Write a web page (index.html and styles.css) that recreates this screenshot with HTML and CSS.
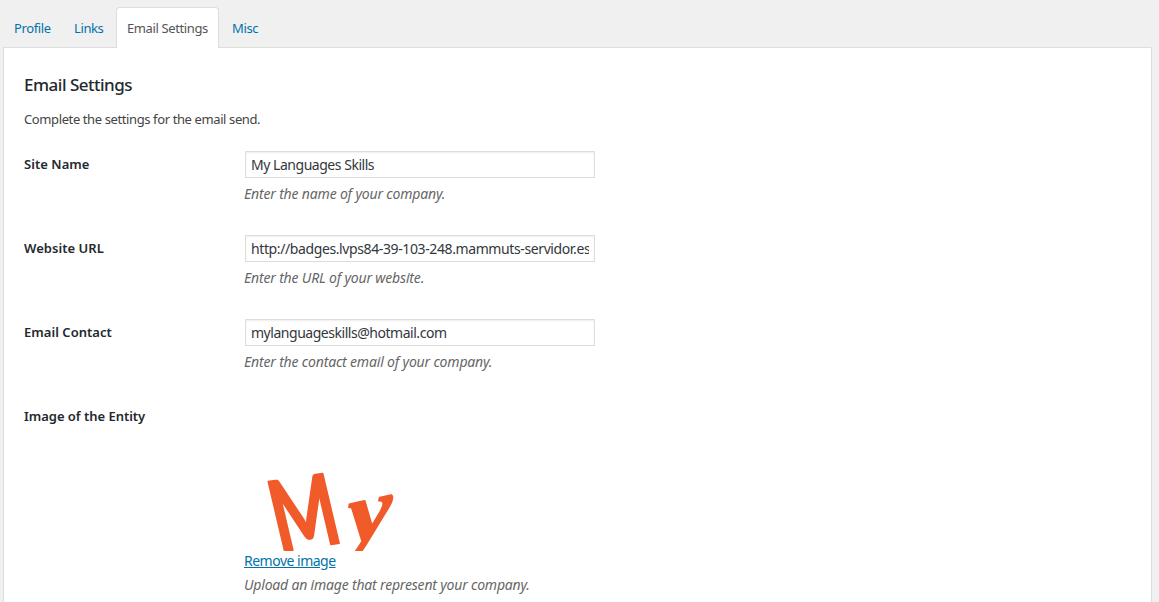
FILE: index.html
```html
<!DOCTYPE html>
<html lang="en">
<head>
<meta charset="utf-8">
<title>Email Settings</title>
<link rel="stylesheet" href="styles.css">
</head>
<body>
<nav class="tabs">
  <a class="tab tab-profile" href="#">Profile</a>
  <a class="tab tab-links" href="#">Links</a>
  <a class="tab tab-active" href="#">Email Settings</a>
  <a class="tab tab-misc" href="#">Misc</a>
</nav>
<main class="panel">
  <h2 class="title">Email Settings</h2>
  <p class="intro">Complete the settings for the email send.</p>
  <div class="row">
    <label class="label" for="site">Site Name</label>
    <div class="field">
      <input class="input" id="site" type="text" value="My Languages Skills">
      <p class="hint">Enter the name of your company.</p>
    </div>
  </div>
  <div class="row">
    <label class="label" for="url">Website URL</label>
    <div class="field">
      <input class="input input-url" id="url" type="text" value="http://badges.lvps84-39-103-248.mammuts-servidor.es">
      <p class="hint">Enter the URL of your website.</p>
    </div>
  </div>
  <div class="row">
    <label class="label" for="email">Email Contact</label>
    <div class="field">
      <input class="input" id="email" type="text" value="mylanguageskills@hotmail.com">
      <p class="hint">Enter the contact email of your company.</p>
    </div>
  </div>
  <div class="row row-image">
    <span class="label label-image">Image of the Entity</span>
    <div class="field">
      <svg class="logo" width="150" height="150" viewBox="0 0 150 150" role="img" aria-label="My">
        <g class="logo-text">
          <text transform="matrix(.74 -.11 .24 1.02 35 151)" font-size="94">M</text>
          <text class="logo-y" transform="matrix(1.15 -.25 0 1 104 143)" font-size="86">y</text>
        </g>
      </svg>
      <a class="remove" href="#">Remove image</a>
      <p class="hint hint-image">Upload an image that represent your company.</p>
    </div>
  </div>
</main>
</body>
</html>
```
FILE: styles.css
```css
* { box-sizing: border-box; }
html { height: 100%; overflow: hidden; }
body {
  display: flex;
  flex-direction: column;
  margin: 0;
  height: 100%;
  overflow: hidden;
  padding: 7px 7px 0 3px;
  background: #f0f0f0;
  color: #444;
  font: 13px/20px "Noto Sans", "Open Sans", sans-serif;
  letter-spacing: -0.39px;
}
a { color: #0073aa; }
.tabs { display: flex; flex: none; height: 40px; }
.tab {
  height: 41px;
  padding: 10px 0 0 10px;
  text-decoration: none;
  white-space: nowrap;
  border: 1px solid transparent;
  letter-spacing: -0.38px;
}
.tab-profile { width: 60px; }
.tab-links { width: 53px; }
.tab-active {
  position: relative;
  width: 103px;
  background: #fff;
  color: #555;
  border-color: #ddd;
  border-bottom: 0;
  border-radius: 4px 4px 0 0;
}
.tab-misc { padding-left: 12px; }
.panel {
  flex: 1;
  min-height: 0;
  padding: 24px 20px 0;
  background: #fff;
  border: 1px solid #ddd;
  border-bottom: 0;
  border-top-right-radius: 2px;
}
.title {
  margin: 0 0 11px;
  font-size: 17px;
  line-height: 26px;
  font-weight: 500;
  letter-spacing: -0.5px;
  color: #23282d;
}
.intro { margin: 0 0 22px; }
.row { display: flex; height: 84px; }
.row-image { height: auto; }
.label {
  width: 220px;
  padding-top: 3px;
  font-weight: 600;
  letter-spacing: 0.04px;
  color: #23282d;
}
.label-image { letter-spacing: -0.03px; }
.field { width: 352px; }
.input {
  display: block;
  width: 350px;
  height: 27px;
  margin: 0 0 0 1px;
  padding: 2px 5px;
  border: 1px solid #ddd;
  background: #fff;
  box-shadow: inset 0 1px 2px rgba(0, 0, 0, .07);
  font: 14px "Noto Sans", "Open Sans", sans-serif;
  letter-spacing: -0.47px;
  color: #32373c;
  outline: none;
}
.input-url { letter-spacing: -0.39px; }
.hint {
  margin: 6px 0 0;
  font-size: 14px;
  font-style: italic;
  letter-spacing: -0.17px;
  color: #666;
  white-space: nowrap;
}
.logo { display: block; margin-top: -2px; }
.logo-text {
  font-family: Lato, sans-serif;
  font-weight: 700;
  fill: #f15a29;
  stroke: #f15a29;
  stroke-width: 2px;
  stroke-linejoin: round;
  letter-spacing: 0;
}
.logo-y { font-family: "Liberation Serif", serif; font-style: italic; }
.remove { display: block; font-size: 14px; letter-spacing: -0.5px; }
.hint-image { margin-top: 4px; letter-spacing: -0.19px; }
```
